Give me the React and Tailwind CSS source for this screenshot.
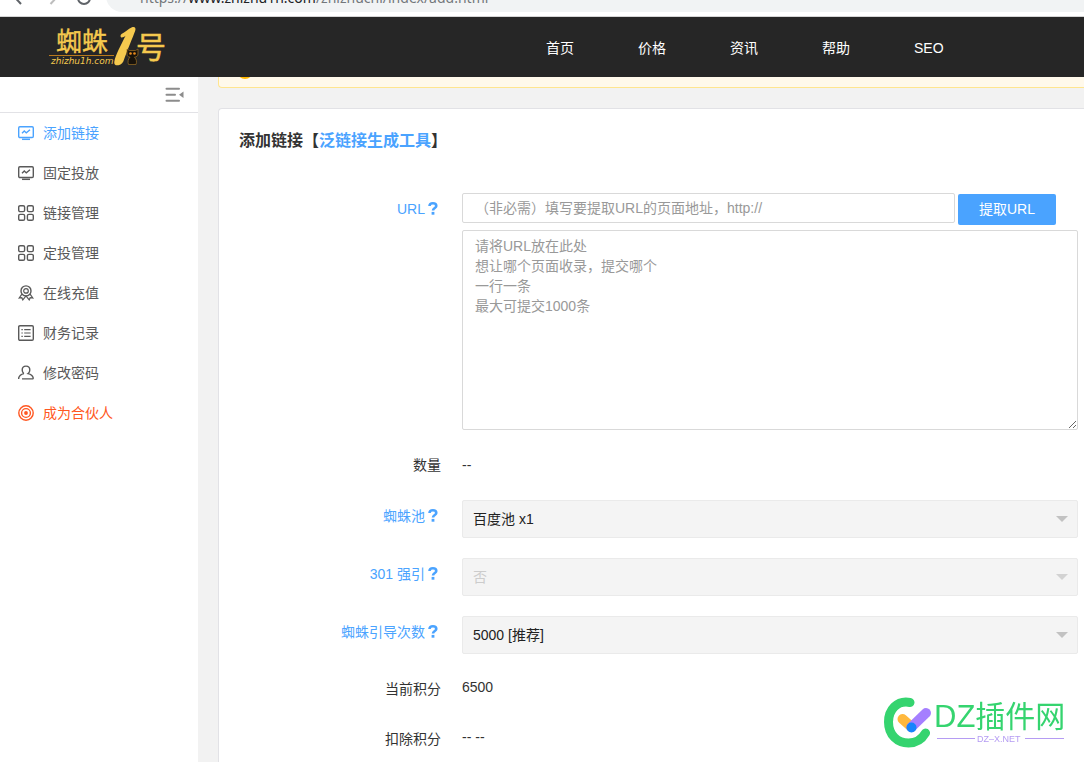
import React from "react";

const stroke = {
  width: 16,
  height: 16,
  viewBox: "0 0 16 16",
  fill: "none",
  stroke: "currentColor",
  strokeWidth: 1.4,
  className: "shrink-0",
  "aria-hidden": true,
};

const MonitorIcon = () => (
  <svg {...stroke}>
    <rect x="0.7" y="1.700" width="14.6" height="10.8" rx="1.2" />
    <path d="M4 8.200l2.3-2.3 2 2L12 4.8" />
    <path d="M4 14.300h8" strokeWidth="1.5" />
  </svg>
);

const GridIcon = () => (
  <svg {...stroke}>
    <rect x="0.7" y="0.7" width="5.9" height="5.9" rx="1.4" />
    <rect x="9.4" y="0.7" width="5.9" height="5.9" rx="1.4" />
    <rect x="0.7" y="9.4" width="5.9" height="5.9" rx="1.4" />
    <rect x="9.4" y="9.4" width="5.9" height="5.9" rx="1.4" />
  </svg>
);

const MedalIcon = () => (
  <svg {...stroke}>
    <circle cx="8" cy="5.9" r="5" />
    <circle cx="8" cy="5.9" r="2.3" strokeWidth="1.2" />
    <path d="M3.9 9.2L1.2 13l2.6-.3 1 2.2L8 10.9l3.2 4 1-2.2 2.6.3-2.7-3.8" strokeWidth="1.2" />
  </svg>
);

const ListIcon = () => (
  <svg {...stroke}>
    <rect x="0.7" y="0.7" width="14.6" height="14.6" rx="1.2" />
    <path d="M3.4 4.6h1.4M3.4 8h1.4M3.4 11.4h1.4M6.2 4.6h6.4M6.2 8h6.4M6.2 11.4h6.4" strokeWidth="1.2" />
  </svg>
);

const UserIcon = () => (
  <svg {...stroke}>
    <path d="M5.9 8.6C4.7 7.8 4.2 6.5 4.2 5c0-2.300 1.500-3.900 3.800-3.900s3.800 1.600 3.800 3.900c0 1.500-.5 2.800-1.700 3.600 2.800.7 4.600 2.200 5.100 4.200.1.700-.2 1.100-.8 1.100H4M5.900 8.600C3 9.300 1.200 10.800.700 12.900v1" />
  </svg>
);

const TargetIcon = () => (
  <svg {...stroke}>
    <circle cx="8" cy="8" r="7.2" />
    <circle cx="8" cy="8" r="4.400" />
    <circle cx="8" cy="8" r="1.900" fill="currentColor" stroke="none" />
  </svg>
);

const menu = [
  { label: "添加链接", Icon: MonitorIcon, color: "text-[#4aa3ff]" },
  { label: "固定投放", Icon: MonitorIcon, color: "text-[#595959]" },
  { label: "链接管理", Icon: GridIcon, color: "text-[#595959]" },
  { label: "定投管理", Icon: GridIcon, color: "text-[#595959]" },
  { label: "在线充值", Icon: MedalIcon, color: "text-[#595959]" },
  { label: "财务记录", Icon: ListIcon, color: "text-[#595959]" },
  { label: "修改密码", Icon: UserIcon, color: "text-[#595959]" },
  { label: "成为合伙人", Icon: TargetIcon, color: "text-[#ff5722]" },
];

function BrowserBar() {
  return (
    <div className="flex h-[17px] shrink-0 items-start overflow-hidden border-b border-[#d5d5d5] bg-white">
      <div className="flex h-3 w-full items-end">
        <svg width="106" height="12" viewBox="0 0 106 12" fill="none" strokeWidth="2" className="shrink-0" aria-hidden="true">
          <path d="M14.500-3L21 4" stroke="#5f6368" />
          <path d="M57-3L50.500 4" stroke="#bdbdbd" />
          <path d="M78-2a6 6 0 0 0 12 0" stroke="#5f6368" />
        </svg>
        <div className="flex h-8 grow items-end gap-3 rounded-l-full bg-[#f1f3f4] pb-1 pl-[14px] font-['Noto_Sans',sans-serif] text-sm text-[#73777b]">
          <svg width="8" height="8" viewBox="0 0 8 8" className="mb-1" aria-hidden="true">
            <rect y="-4" width="8" height="7" rx="1" fill="#5f6368" />
          </svg>
          <span className="leading-5">
            https://<span className="text-[#202124]">www.zhizhu1h.com</span>/zhizhuchi/index/add.html
          </span>
        </div>
      </div>
    </div>
  );
}

function Logo() {
  return (
    <svg width="118" height="42" viewBox="0 0 118 42" fill="#f5c94e" role="img" aria-label="蜘蛛1号">
      <text x="7" y="25" fontSize="26" fontFamily="'Noto Sans CJK SC', sans-serif" stroke="#f5c94e" strokeWidth=".4">蜘蛛</text>
      <path d="M0 29.500h65" stroke="#b8791c" strokeWidth="1" />
      <text x="2" y="38" fontSize="9" fontFamily="'DejaVu Sans', sans-serif" fontStyle="italic">zhizhu1h.com</text>
      <path d="M72.500 8C76 6.500 79 3 83 1.200c2.700-.9 4.200.6 3.200 3.500-2.500 7-7.500 18-11 28.300-1 3.500-2.700 5.700-5.700 6.300-3 .4-4.700-.9-4.200-3.600C66.500 29 71.500 20 76.500 9.800c-1.500 1.200-3.500 2.200-4.500 1.400-.8-.8-.5-2.400.5-3.200z" />
      <path d="M78 23l2.500 1.500h6L89 23v5c0 2-1.500 3-3.500 3.200 2 1.800 2.500 4.800 1.500 7.300h-7.500c-1-2.500-.5-5.500 1.500-7.300-2-.2-3-1.200-3-3.200z" fill="#17120b" stroke="#9b6e22" strokeWidth=".7" />
      <circle cx="81.500" cy="27.500" r="1.300" fill="#e88a1c" />
      <circle cx="85.500" cy="27.500" r="1.300" fill="#e88a1c" />
      <text x="87" y="32" fontSize="30" fontFamily="'Noto Sans CJK SC', sans-serif" stroke="#f5c94e" strokeWidth=".5">号</text>
    </svg>
  );
}

function QuestionIcon() {
  return (
    <svg width="10" height="14" viewBox="0 0 10 14" fill="none" stroke="currentColor" className="mr-[3px] shrink-0" aria-hidden="true">
      <path d="M1.500 4C1.600 2.100 3 1.300 4.900 1.300c2 0 3.400.9 3.400 2.600C8.300 6 5 6 5 8.600" strokeWidth="2.600" />
      <path d="M3.600 9.900h2.800v2.800H3.600z" fill="currentColor" stroke="none" />
    </svg>
  );
}

function HelpLabel({ htmlFor, children }) {
  return (
    <label htmlFor={htmlFor} className="flex h-8 w-[222px] shrink-0 items-center justify-end gap-[3px] text-[#4aa3ff]">
      {children}
      <QuestionIcon />
    </label>
  );
}

function SelectRow({ id, label, value, disabled }) {
  return (
    <div className="mb-5 flex gap-[21px]">
      <HelpLabel htmlFor={id}>{label}</HelpLabel>
      <div className="relative grow">
        <select
          id={id}
          disabled={disabled}
          className="block h-[38px] w-full appearance-none rounded-xs border border-[#eaeaea] bg-[#f4f4f4] px-[10px] text-sm text-[#222] opacity-100 disabled:text-[#ccc]"
        >
          <option>{value}</option>
        </select>
        <svg
          width="12"
          height="6"
          viewBox="0 0 12 6"
          className={disabled ? "pointer-events-none absolute top-4 right-[10px] text-[#d2d2d2]" : "pointer-events-none absolute top-4 right-[10px] text-[#c2c2c2]"}
          aria-hidden="true"
        >
          <path d="M0 0h12L6 6z" fill="currentColor" />
        </svg>
      </div>
    </div>
  );
}

function InfoRow({ label, value }) {
  return (
    <div className="flex h-[50px] items-start gap-[21px]">
      <span className="w-[222px] shrink-0 pt-[5px] text-right leading-5">{label}</span>
      <span className="pt-[3px] leading-5">{value}</span>
    </div>
  );
}

function Watermark() {
  return (
    <div className="pointer-events-none fixed right-[18px] bottom-[14px]">
      <svg width="182" height="52" viewBox="0 0 182 52" fill="none" role="img" aria-label="DZ插件网">
        <path d="M26 6.500C13 4 4.500 14 4.500 26c0 13 9 21 20 21 8 0 13.500-4 17-10" stroke="#35d46f" strokeWidth="9" strokeLinecap="round" />
        <path d="M18.500 23l9 8" stroke="#ffb83d" strokeWidth="10" strokeLinecap="round" />
        <path d="M27.500 31L42 17" stroke="#a57fff" strokeWidth="10" strokeLinecap="round" />
        <circle cx="27.500" cy="31.500" r="5" fill="#1684fc" />
        <text x="50" y="31" fontSize="31" fill="#35d46f" fontFamily="'Liberation Sans', 'Noto Sans CJK SC', sans-serif">
          DZ<tspan fontFamily="'Noto Sans CJK SC', sans-serif" fontSize="30">插件网</tspan>
        </text>
        <path d="M53 42.500h38M141 42.500h39" stroke="#b59cf3" strokeWidth="1" />
        <text x="93" y="46" fontSize="9" fill="#b59cf3" fontFamily="'Liberation Sans', sans-serif">DZ–X.NET</text>
      </svg>
    </div>
  );
}

export default function App() {
  return (
    <div className="flex h-screen flex-col overflow-hidden bg-[#f2f2f2] font-['Liberation_Sans','Noto_Sans_CJK_SC',sans-serif] text-sm text-[#333]">
      <BrowserBar />
      <header className="flex h-[60px] shrink-0 items-center bg-[#262626]">
        <a href="#home" className="w-[546px] shrink-0 pl-[49px]">
          <Logo />
        </a>
        <nav className="flex gap-16 pt-0.5 text-white">
          {["首页", "价格", "资讯", "帮助", "SEO"].map((t) => (
            <a key={t} href="#nav" className="leading-5 whitespace-nowrap">{t}</a>
          ))}
        </nav>
      </header>

      <div className="flex min-h-0 grow">
        <aside className="w-[198px] shrink-0 bg-white">
          <div className="flex h-9 items-center justify-end border-b border-[#e2e2e6] pr-[14px]">
            <button type="button" aria-label="收起菜单">
              <svg width="19" height="16" viewBox="0 0 19 16" fill="#8c8c8c" aria-hidden="true">
                <rect x="0.500" y="0.700" width="14.500" height="2" rx="1" />
                <rect x="0.500" y="6.700" width="10.500" height="2" rx="1" />
                <rect x="0.500" y="12.700" width="14.500" height="2" rx="1" />
                <path d="M18.500 4.500v6.400L14 7.700z" />
              </svg>
            </button>
          </div>
          <nav>
            {menu.map(({ label, Icon, color }) => (
              <a key={label} href="#menu" className={`flex h-10 items-center gap-[9px] pl-[18px] ${color}`}>
                <Icon />
                {label}
              </a>
            ))}
          </nav>
        </aside>

        <main className="flex min-w-0 grow flex-col pl-5">
          <div className="flex h-[11px] shrink-0 items-end overflow-hidden rounded-bl-sm border-b border-l border-[#ffe58f] bg-[#fff9eb] pb-2 pl-[18px]">
            <span className="size-4 shrink-0 rounded-full bg-[#ffb800]" />
          </div>

          <section className="mt-5 grow rounded-tl-sm border-t border-l border-[#e2e2e6] bg-white pt-5 pr-[6px]">
            <h1 className="pl-5 text-base leading-6 font-bold text-[#333]">
              添加链接【<a href="#tool" className="text-[#4aa3ff]">泛链接生成工具</a>】
            </h1>

            <form className="mt-10">
              <div className="flex gap-[21px]">
                <HelpLabel htmlFor="url">URL</HelpLabel>
                <div className="flex grow flex-col gap-[5px]">
                  <div className="flex items-start gap-[3px] pr-[22px]">
                    <input
                      id="url"
                      placeholder="（非必需）填写要提取URL的页面地址，http://"
                      className="h-[30px] min-w-0 grow rounded-xs border border-[#d9d9d9] bg-white px-3 placeholder:text-[#999]"
                    />
                    <button type="button" className="mt-px h-[31px] w-[98px] shrink-0 rounded-xs bg-[#4aa3ff] pb-0.5 text-white">
                      提取URL
                    </button>
                  </div>
                  <textarea
                    aria-label="URL列表"
                    placeholder={"请将URL放在此处\n想让哪个页面收录，提交哪个\n一行一条\n最大可提交1000条"}
                    className="block h-[200px] w-full resize rounded-xs border border-[#d9d9d9] bg-white px-3 py-[5px] leading-5 placeholder:text-[#999]"
                  />
                </div>
              </div>

              <div className="flex h-[70px] items-center gap-[21px]">
                <span className="w-[222px] shrink-0 text-right">数量</span>
                <span>--</span>
              </div>

              <SelectRow id="pool" label="蜘蛛池" value="百度池 x1" />
              <SelectRow id="redirect" label="301 强引" value="否" disabled />
              <SelectRow id="times" label="蜘蛛引导次数" value="5000 [推荐]" />

              <InfoRow label="当前积分" value="6500" />
              <InfoRow label="扣除积分" value="-- --" />
            </form>
          </section>
        </main>
      </div>
      <Watermark />
    </div>
  );
}
